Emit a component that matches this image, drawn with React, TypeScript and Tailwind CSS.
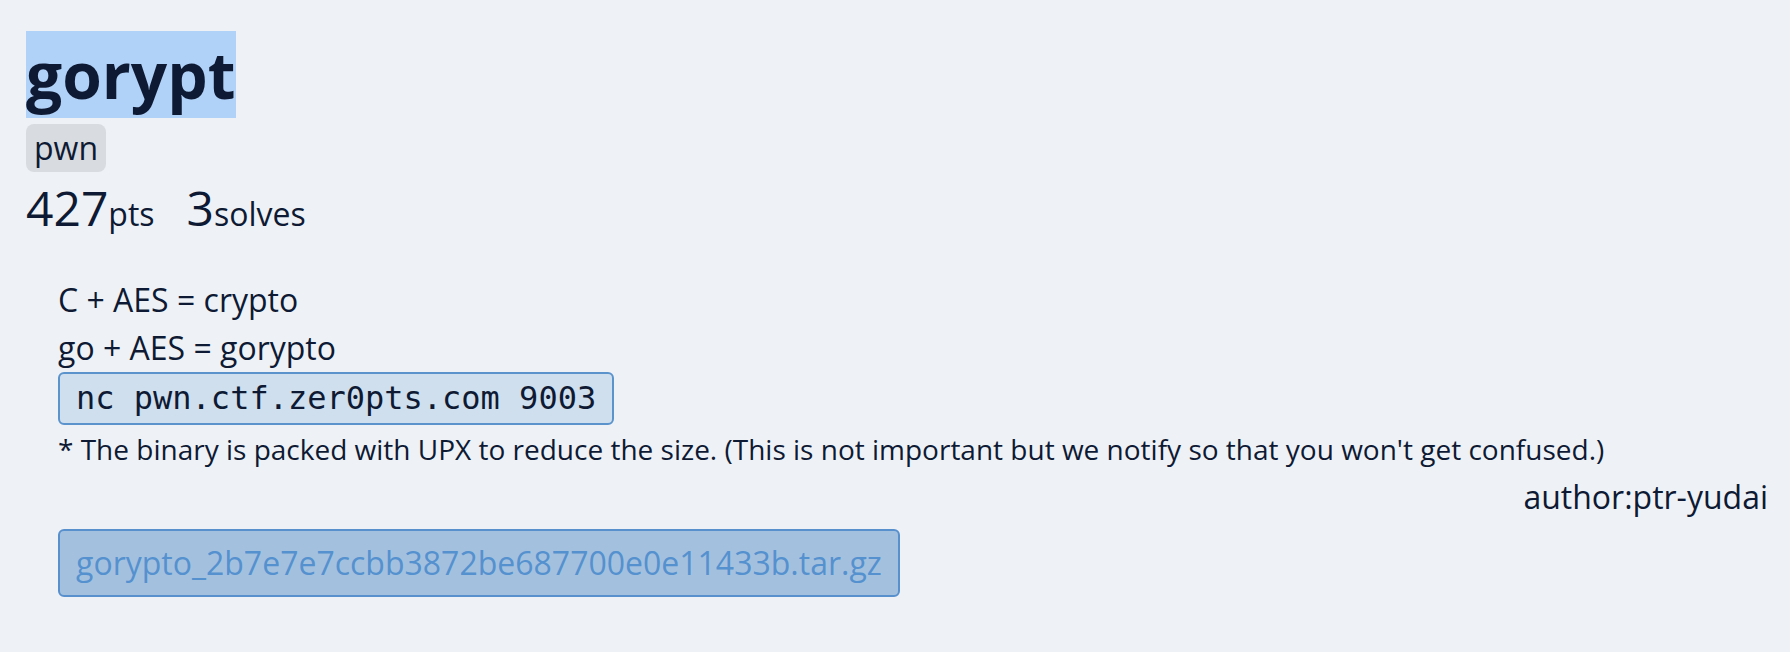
const sans = "font-['Open_Sans',_'Noto_Sans',_sans-serif]";

export default function App() {
  return (
    <div className={`min-h-[652px] bg-[#eef2f7] pt-8 pl-[26px] pr-[22px] text-[#0e1a33] ${sans}`}>
      <h1 className="text-[64px] font-bold leading-[86px]">
        <span className="bg-[#b1d2f8]">gorypt</span>
      </h1>
      <div className="mt-[6px] flex">
        <span className="rounded-lg bg-[#d8dbe0] px-2 text-[32px] leading-[48px]">pwn</span>
      </div>
      <div className="flex items-baseline text-[48px] leading-[72px]">
        <span>427</span>
        <span className="text-[32px]">pts</span>
        <span className="ml-8">3</span>
        <span className="text-[32px]">solves</span>
      </div>

      <div className="mt-[26px] ml-8 text-[32px] leading-[48px]">
        <p>C + AES = crypto</p>
        <p>go + AES = gorypto</p>
        <div className="flex">
          <code className="rounded-md border-2 border-[#5b93cc] bg-[#cfdfee] px-4 font-['DejaVu_Sans_Mono',_monospace] text-[32px] leading-[49px]">
            nc pwn.ctf.zer0pts.com 9003
          </code>
        </div>
        <p className="text-[28px]">
          * The binary is packed with UPX to reduce the size. (This is not important but we notify so that you won't get confused.)
        </p>
        <p className="text-right">author:ptr-yudai</p>
        <div className="mt-2 flex">
          <a className="rounded-md border-2 border-[#5890cd] bg-[#a3c1df] px-4 py-2 text-[#5591cf]">
            gorypto_2b7e7e7ccbb3872be687700e0e11433b.tar.gz
          </a>
        </div>
      </div>
    </div>
  );
}
